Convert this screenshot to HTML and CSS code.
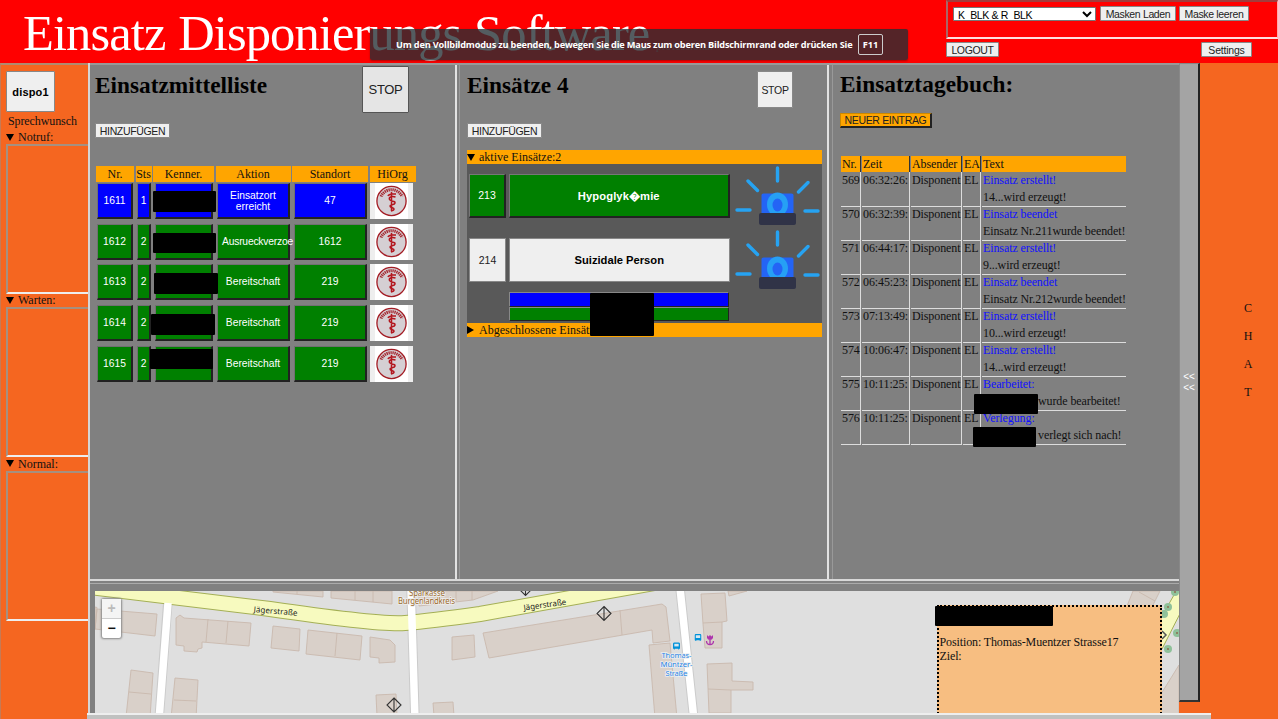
FILE: index.html
```html
<!DOCTYPE html>
<html lang="de">
<head>
<meta charset="utf-8">
<title>Einsatz Disponierungs Software</title>
<link rel="stylesheet" href="styles.css">
</head>
<body>
<svg class="defs" width="0" height="0">
  <defs>
    <symbol id="org" viewBox="0 0 43 36">
      <rect width="43" height="36" fill="#eee"/><rect x="5" width="33" height="36" fill="#fff"/>
      <circle cx="21.500" cy="18" r="14.600" fill="#d5cfd3" stroke="#a31c24" stroke-width="1.300"/>
      <path d="M11 13.500A11.500 11.500 0 0 1 32 13.500" fill="none" stroke="#a52a32" stroke-width="3" stroke-dasharray="1.300 .7"/>
      <path d="M21.500 9v19M18 13c1-3 4-2 8-2M25.500 14c-4-1-7 0-6 2.500s6 1 5.500 3.500-5 1-5 3 4 1.500 4 3-3 2-3 2" fill="none" stroke="#b3161e" stroke-width="1.500"/>
    </symbol>
    <symbol id="siren" viewBox="0 0 86 60">
      <path d="M43.500 3v13M14 16l9.500 9.500M74 17.500L64.500 27M3 45h13M71 46h13" stroke="#26a3f2" stroke-width="3.400" stroke-linecap="round"/>
      <path d="M27.500 49V30q0-1.500 2-1.500h28q2 0 2 1.500v19z" fill="#2464f5"/>
      <ellipse cx="43.500" cy="39.500" rx="10.500" ry="12" fill="#26a0f5"/>
      <ellipse cx="43.500" cy="40" rx="5" ry="6.500" fill="#2464f5"/>
      <rect x="25" y="48" width="37" height="12" rx="2" fill="#303347"/>
    </symbol>
    <symbol id="gate" viewBox="0 0 16 16"><path d="M8 1l7 7-7 7-7-7zM8 1v14" fill="none" stroke="#333" stroke-width="1.100"/></symbol>
    <symbol id="bus" viewBox="0 0 8 8"><path d="M1 0h6l1 1v6H7v1H6V7H2v1H1V7H0V1z" fill="#0092da"/><path d="M1.500 1.500h5v3h-5z" fill="#d8e8f0"/></symbol>
  </defs>
</svg>
<header class="top">
  <div class="title">Einsatz Disponierungs Software <small>professional</small></div>
  <div class="tools">
    <div class="masks">
      <select class="mask-select"><option>K_BLK &amp; R_BLK</option></select>
      <button class="btn load">Masken Laden</button>
      <button class="btn clear">Maske leeren</button>
    </div>
    <div class="session"><button class="btn logout">LOGOUT</button><button class="btn settings">Settings</button></div>
  </div>
  <div class="toast"><span>Um den Vollbildmodus zu beenden, bewegen Sie die Maus zum oberen Bildschirmrand oder drücken Sie</span><kbd>F11</kbd></div>
</header>
<div class="body">
  <aside class="side">
    <button class="user">dispo1</button>
    <div class="wish">Sprechwunsch</div>
    <div class="queue"><div class="sum"><i class="down"></i>Notruf:</div><div class="box"></div></div>
    <div class="queue"><div class="sum"><i class="down"></i>Warten:</div><div class="box"></div></div>
    <div class="queue"><div class="sum"><i class="down"></i>Normal:</div><div class="box"></div></div>
  </aside>
  <main class="main">
    <div class="panels">
      <section class="panel units">
        <div class="head"><h2>Einsatzmittelliste</h2><button class="stop big">STOP</button></div>
        <button class="btn add">HINZUFÜGEN</button>
        <div class="urow uhead"><b>Nr.</b><b>Sts</b><b>Kenner.</b><b>Aktion</b><b>Standort</b><b>HiOrg</b></div>
        <div class="urow blue"><button>1611</button><button>1</button><button><i class="mask m1"></i></button><button>Einsatzort<br>erreicht</button><button>47</button><svg><use href="#org"/></svg></div>
        <div class="urow"><button>1612</button><button>2</button><button><i class="mask m2"></i></button><button class="long">Ausrueckverzoe</button><button>1612</button><svg><use href="#org"/></svg></div>
        <div class="urow"><button>1613</button><button>2</button><button><i class="mask m3"></i></button><button>Bereitschaft</button><button>219</button><svg><use href="#org"/></svg></div>
        <div class="urow"><button>1614</button><button>2</button><button><i class="mask m4"></i></button><button>Bereitschaft</button><button>219</button><svg><use href="#org"/></svg></div>
        <div class="urow"><button>1615</button><button>2</button><button><i class="mask m5"></i></button><button>Bereitschaft</button><button>219</button><svg><use href="#org"/></svg></div>
      </section>
      <section class="panel ops">
        <div class="head"><h2>Einsätze 4</h2><button class="stop">STOP</button></div>
        <button class="btn add">HINZUFÜGEN</button>
        <div class="bar first"><i class="down"></i>aktive Einsätze:2</div>
        <div class="active">
          <div class="op green"><button>213</button><button class="name">Hypoglyk&#xFFFD;mie</button><svg><use href="#siren"/></svg></div>
          <div class="op"><button>214</button><button class="name">Suizidale Person</button><svg><use href="#siren"/></svg></div>
          <div class="assigned"><i class="unit b"></i><i class="unit"></i><i class="mask m6"></i></div>
        </div>
        <div class="bar"><i class="right"></i>Abgeschlossene Einsätze</div>
      </section>
      <section class="panel diary">
        <h2>Einsatztagebuch:</h2>
        <button class="new">NEUER EINTRAG</button>
        <div class="log">
          <div class="lrow lhead"><span>Nr.</span><span>Zeit</span><span>Absender</span><span>EA</span><span>Text</span></div>
          <div class="lrow"><span>569</span><span>06:32:26:</span><span>Disponent</span><span>EL</span><span><em>Einsatz erstellt!</em><br>14...wird erzeugt!</span></div>
          <div class="lrow"><span>570</span><span>06:32:39:</span><span>Disponent</span><span>EL</span><span><em>Einsatz beendet</em><br>Einsatz Nr.211wurde beendet!</span></div>
          <div class="lrow"><span>571</span><span>06:44:17:</span><span>Disponent</span><span>EL</span><span><em>Einsatz erstellt!</em><br>9...wird erzeugt!</span></div>
          <div class="lrow"><span>572</span><span>06:45:23:</span><span>Disponent</span><span>EL</span><span><em>Einsatz beendet</em><br>Einsatz Nr.212wurde beendet!</span></div>
          <div class="lrow"><span>573</span><span>07:13:49:</span><span>Disponent</span><span>EL</span><span><em>Einsatz erstellt!</em><br>10...wird erzeugt!</span></div>
          <div class="lrow"><span>574</span><span>10:06:47:</span><span>Disponent</span><span>EL</span><span><em>Einsatz erstellt!</em><br>14...wird erzeugt!</span></div>
          <div class="lrow"><span>575</span><span>10:11:25:</span><span>Disponent</span><span>EL</span><span><em>Bearbeitet:</em><br><s></s>wurde bearbeitet!<i class="mask m7"></i></span></div>
          <div class="lrow"><span>576</span><span>10:11:25:</span><span>Disponent</span><span>EL</span><span><em>Verlegung:</em><br><s></s>verlegt sich nach!<i class="mask m8"></i></span></div>
        </div>
      </section>
    </div>
    <section class="mapwrap">
      <svg class="map" viewBox="95 591 1084 123">
        <rect x="95" y="591" width="1084" height="123" fill="#dfdfdf"/>
        <g fill="#d9d0c9" stroke="#c9b9ae" stroke-width=".9">
          <path d="M95 607l2 .5-2 22zM120 611l37 3-2 22-60-7 2-20z"/>
          <path d="M176 618l4-3 4 3 67 5-2 23-47-4v6l-4 1-1 3-13-1v-5l-8-1zM208 619l-2 23M228 621l-2 22"/>
          <path d="M273 626l27 3-1 22-28-3zM308 630l54 6-2 24-54-6zM337 633l-2 23M370 637l20 3 5 5v17l-16 1v-5l-9-1z"/>
          <path d="M131 670l22 3-3 45-24-1zM129 692l22 2M175 678l23 2-2 39-25-1zM174 700l22 1"/>
          <path d="M273 591h50v6l-50-5zM297 591v3M331 591h61v13l-61-6zM355 591v9M373 591v11"/>
          <path d="M419 591h79l-25 9-54 6zM456 591v10M472 591v9M376 695l20-1 1 22h-20zM433 703l20-1 1 14h-20z"/>
          <path d="M452 637l22-2 1 22-23 3zM483 633l179-29 4 3 4 34-17 2-1-13-163 28zM620 610l2 25M649 645l21-2 7 75h-22z"/>
          <path d="M701 594l24-1 2 28 -5 1v26h-17l-2-24zM703 623l19-1M728 591h19l-18 5zM707 664l25-1v18l21 1v8h-22v23h-22zM708 689l23 1"/>
          <path d="M1133 591l27 0-20 40-15-20zM1139 592l16 9M1179 665v49h-20l2-20z"/>
        </g>
        <g fill="none" stroke="#cbcbcb" stroke-width="9.500"><path d="M168 600l-9 120M411 588l4 132M680 588l14 132"/></g>
        <path d="M80 586L270 609Q380 625 405 623T480 614L660 582" fill="none" stroke="#a4af55" stroke-width="16"/>
        <path d="M80 586L270 609Q380 625 405 623T480 614L660 582" fill="none" stroke="#f7fabf" stroke-width="14"/>
        <g fill="none" stroke="#fff" stroke-width="7.500"><path d="M168 603l-9 117M411 588l4 132M680 588l14 132"/></g>
        <path d="M1150 637l40-70v27l-28 55z" fill="#f7fabf" stroke="#a4af55"/>
        <g fill="#8fc19a"><circle cx="1175" cy="592" r="4"/><circle cx="1168" cy="607" r="4"/><circle cx="1164" cy="614" r="4"/><circle cx="1177" cy="633" r="4"/><circle cx="1168" cy="649" r="4"/></g>
        <g fill="#8d6b50"><circle cx="1175" cy="592" r="1"/><circle cx="1168" cy="607" r="1"/><circle cx="1177" cy="633" r="1"/><circle cx="1168" cy="649" r="1"/></g>
        <path d="M1162 631l4 4-4 4" fill="none" stroke="#555" stroke-width="1.500"/>
        <g class="street"><text transform="translate(253.500 612) rotate(5)" textLength="44">Jägerstraße</text><text transform="translate(524 610.500) rotate(-8)" textLength="43">Jägerstraße</text></g>
        <g class="shop"><text x="427" y="595.500" textLength="36">Sparkasse</text><text x="426.500" y="604" textLength="57">Burgenlandkreis</text></g>
        <g class="stopname"><text x="676.500" y="658" textLength="30">Thomas-</text><text x="676.500" y="667" textLength="32">Müntzer-</text><text x="676.500" y="675.500" textLength="22">Straße</text></g>
        <use href="#gate" x="517.500" y="580.500" width="16" height="16"/><use href="#gate" x="596" y="605.500" width="16" height="16"/><use href="#gate" x="386" y="697" width="16" height="16"/>
        <use href="#bus" x="673" y="642" width="7" height="8"/><use href="#bus" x="694.500" y="633.500" width="7" height="8"/>
        <path d="M707 635l1.500 1.500 1.500-1.500 1.500 1.500 1.500-1.500v3q-1 2-3 2t-3-2z" fill="#ad35ad"/><path d="M710 640v5M706.500 641q0 3.500 3.500 3.500t3.500-3.500" fill="none" stroke="#ad35ad" stroke-width="1.300"/>
      </svg>
      <div class="zoom"><span class="off">+</span><span>−</span></div>
      <div class="info"><i class="mask m9"></i><br><br>Position: Thomas-Muentzer Strasse17<br>Ziel:</div>
    </section>
  </main>
  <button class="rail">&lt;&lt;<br>&lt;&lt;</button>
  <aside class="chat"><span>C</span><span>H</span><span>A</span><span>T</span></aside>
</div>
<div class="foot"></div>
</body>
</html>
```
FILE: styles.css
```css
* { box-sizing: border-box; }
body { margin: 0; width: 1278px; height: 719px; overflow: hidden; position: relative; background: #f56620; font: 12px/14px "Liberation Serif", serif; color: #111; }
button { margin: 0; padding: 0; font-family: "Liberation Sans", sans-serif; color: #222; }
.defs { position: absolute; }
.mask { position: absolute; background: #000; border-radius: 1px; z-index: 2; }
.top { height: 63px; background: #f00; display: flex; justify-content: space-between; position: relative; }
.title { padding-left: 23px; font-size: 50.500px; letter-spacing: -.880px; word-spacing: 1px; line-height: 66px; color: #fff; white-space: nowrap; }
.title small { font-size: 11px; letter-spacing: .3px; margin-left: -6px; color: #c66; }
.toast { position: absolute; z-index: 5; left: 370px; top: 29px; width: 538px; height: 31px; background: rgba(36,46,51,.78); border-radius: 2px; box-shadow: 0 1px 2px #6008; display: flex; align-items: center; padding-left: 26px; gap: 5px; color: #fff; font: bold 9.200px "Open Sans", sans-serif; white-space: nowrap; }
.toast span { width: 457px; letter-spacing: -.18px; }
.toast kbd { width: 25px; height: 21px; border: 1px solid #ccc; border-radius: 2px; font: inherit; line-height: 19px; text-align: center; }
.tools { width: 332px; }
.masks { height: 39px; border: 2px solid; border-color: #a33c3c #faa #fdd #a66; border-right-width: 1px; display: flex; align-items: flex-start; gap: 4px; padding: 4px 0 0 5px; }
.btn, .mask-select { height: 15px; border: 1px solid #888; border-radius: 1px; background: #efefef; font-size: 10.500px; letter-spacing: -.35px; line-height: 12px; }
.mask-select { width: 143px; margin-top: 1px; height: 14px; background: #fff; border-color: #777; padding: 0; font-family: "Liberation Sans", sans-serif; line-height: 10px; }
.load { width: 76px; } .clear { width: 70px; margin-left: -1px; }
.session { display: flex; justify-content: space-between; padding: 3px 26px 0 0; }
.logout { width: 53px; } .settings { width: 51px; letter-spacing: -.2px; }
.body { display: grid; grid-template-columns: 88px 1091px 21px 78px; height: 656px; }
.side { padding: 6px 0 0 5px; border-left: 1px solid #c67a55; border-top: 2px solid #b08b70; height: 656px; }
.user { display: block; width: 49px; height: 41px; border: 1px solid #888; border-radius: 1px; background: #efefef; font-size: 11px; font-weight: bold; color: #000; letter-spacing: .15px; }
.wish { padding: 2px 0 0 2px; height: 18px; letter-spacing: -.1px; }
.queue { height: 163.400px; }
.sum, .bar { display: flex; align-items: center; height: 14px; }
.down { border: 4px solid transparent; border-top: 7px solid #000; border-bottom: 0; margin-right: 4px; }
.right { border: 4px solid transparent; border-left: 7px solid #000; border-right: 0; margin-right: 5px; }
.box { height: 150px; border: solid; border-color: #a59080 transparent #eee #a59080; border-width: 2px 0 2px 2px; }
.main { border-left: 2px solid #d5d5d5; background: #808080; height: 651px; }
.panels { display: grid; grid-template-columns: 367px 372px 350px; height: 518px; border-top: 2px solid #999; border-bottom: 2px solid #d8d8d8; width: 1089px; overflow: hidden; }
.panel { border-right: 2px solid #e2e2e2; padding: 2px 0 0 5px; min-width: 0; }
.ops, .diary { border-left: 1px solid #999; }
.panel.diary { border-right: 0; }
h2 { margin: 0; font-size: 23.300px; line-height: 34px; color: #000; white-space: nowrap; }
.units h2 { line-height: 36px; }
.panel.ops { padding-left: 7px; margin-left: 2px; }
.head { display: flex; justify-content: space-between; height: 55px; padding-right: 46px; }
.ops .head { padding: 4px 34px 0 0; }
.ops h2 { line-height: 28px; }
.stop { width: 36px; height: 37px; border: 1px solid #888; border-radius: 1px; background: #efefef; font-size: 10.500px; letter-spacing: -.3px; }
.big { width: 47px; height: 47px; margin-top: -1px; border-color: #555; background: #e5e5e5; font-size: 13px; }
.add { display: block; width: 75px; margin-top: 1px; }
.urow { display: grid; grid-template-columns: 36px 14px 58px 73px 73px 43px; column-gap: 4px; width: 318px; height: 36px; margin: 0 0 4.700px 2px; position: relative; font-size: 12px; }
.urow svg { position: relative; left: -1px; }
.urow button { background: #008000; border: 2px solid; border-color: #707070 #222 #222 #707070; border-width: 1px 2px 2px 1px; color: #fff; font-size: 10.300px; line-height: 11px; position: relative; white-space: nowrap; min-width: 0; }
.urow.blue button { background: #00f; }
.urow svg { width: 43px; height: 36px; }
.urow .long { text-align: left; padding-left: 4px; letter-spacing: -.2px; }
.uhead { grid-template-columns: 38px 16px 61px 75px 76px 46px; column-gap: 1.500px; width: 320px; height: 16px; margin: 27.500px 0 1.500px 1px; }
.uhead b { background: #ffa500; font-weight: normal; text-align: center; line-height: 16px; }
.m1 { left: -3px; top: 7px; width: 63px; height: 21px; }
.m2 { left: -3px; top: 8px; width: 63px; height: 20px; }
.m3 { left: -2px; top: 8px; width: 64px; height: 21px; }
.m4 { left: -5px; top: 8px; width: 64px; height: 21px; }
.m5 { left: -6px; top: 2px; width: 63px; height: 20px; }
.bar { width: 355px; background: #ffa500; }
.bar.first { margin-top: 12px; }
.active { width: 355px; height: 159px; background: #595959; padding: 0 0 0 2px; }
.op { display: grid; grid-template-columns: 37px 220px 86px; column-gap: 3.500px; height: 64px; align-items: center; padding-bottom: 1px; }
.op button { height: 44px; border: 1px solid #888; background: #efefef; font-size: 10.500px; }
.op .name { font-weight: bold; font-size: 11.200px; color: #000; margin-left: -.5px; }
.op.green .name { letter-spacing: .1px; }
.op.green button { background: #008000; border: solid; border-width: 1px 2px 2px 1px; border-color: #777 #222 #222 #777; color: #fff; }
.op svg { width: 86px; height: 60px; margin: -2px 0 0 .7px; }
.assigned { position: relative; width: 220px; margin-left: 40px; }
.unit { display: block; height: 14.500px; background: #008000; border: 1px solid; border-color: #888 #222 #222 #888; }
.unit.b { background: #00f; }
.m6 { left: 81px; top: 1px; width: 64px; height: 43px; }
.panel.diary { padding: 2px 0 0 7px; margin-left: 3px; }
.diary h2 { letter-spacing: .08px; }
.new { display: block; margin: 12px 0 0; width: 92px; height: 15px; background: #ffa500; border: 1px solid; border-color: #c80 #222 #222 #c80; border-right-width: 2px; border-bottom-width: 2px; font-size: 10.500px; line-height: 11px; letter-spacing: -.35px; white-space: nowrap; }
.log { margin: 27.500px 0 0 1px; width: 286px; letter-spacing: -.1px; }
.lrow { display: grid; grid-template-columns: 20px 48px 51px 18px 144px; column-gap: 1px; height: 34px; line-height: 17px; white-space: nowrap; }
.lrow > span { border-right: 1px solid #ddd; border-bottom: 1px solid #ddd; padding-left: 1px; position: relative; }
.lrow > span:last-child { border-right: 0; }
.lrow em { font-style: normal; color: #11f; }
.lrow s { display: inline-block; width: 55px; }
.lhead { height: 16px; line-height: 16px; }
.lhead > span { background: #ffa500; border-right-color: #333; border-bottom: 0; }
.m7 { left: -8px; top: 18px; width: 64px; height: 20px; }
.m8 { left: -9px; top: 17px; width: 63px; height: 20px; }
.mapwrap { position: relative; margin-top: 2px; height: 131px; border-top: 1px solid #aaa; padding: 7px 0 0 5px; overflow: hidden; }
.map { display: block; width: 1084px; height: 123px; }
.map text { font-family: "Noto Sans", sans-serif; font-size: 8px; text-anchor: middle; stroke: #eee; stroke-width: 1.500px; paint-order: stroke; }
.map .street text { text-anchor: start; fill: #222; stroke: none; }
.shop text { fill: #9b6a2b; }
.map .stopname text { fill: #2585e8; font-size: 7.800px; }
.zoom { position: absolute; left: 12px; top: 15px; width: 19px; height: 39px; background: #fff; border-radius: 2px; box-shadow: 0 0 2px 1px #888; font: bold 14px/19px "Liberation Sans", sans-serif; text-align: center; }
.zoom span { display: block; height: 20px; }
.zoom .off { color: #bbb; background: #f4f4f4; border-bottom: 1px solid #ccc; }
.info { position: absolute; left: 847px; top: 21px; width: 225px; height: 140px; border: 2px dotted #000; background: #f7be81; line-height: 14px; letter-spacing: -.12px; padding-left: .5px; }
.m9 { left: -4px; top: -1px; width: 118px; height: 20px; }
.rail { height: 639px; background: #a4a4a4; border: 1px solid #888; border-right: 2px solid #222; border-bottom: 2px solid #333; color: #fff; font-size: 10px; line-height: 11px; }
.chat { display: flex; flex-direction: column; gap: 14px; align-items: center; padding: 238px 0 0 18px; line-height: 14px; }
.foot { position: absolute; left: 87px; top: 713px; width: 1124px; height: 6px; background: #c0c1c0; border-top: 2px solid #eee; }
```
